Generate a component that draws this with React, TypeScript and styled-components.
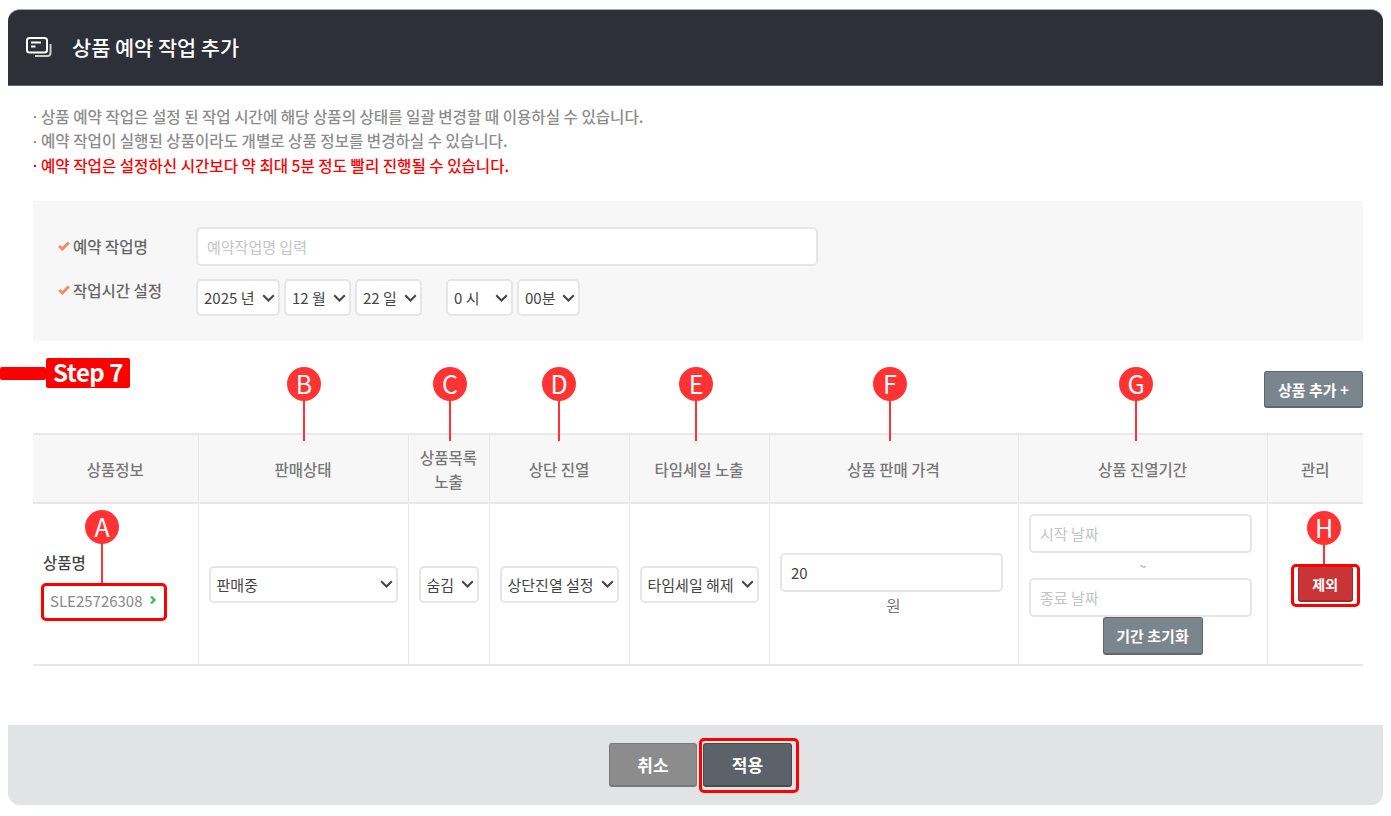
import styled, { createGlobalStyle } from 'styled-components';

const GlobalStyle = createGlobalStyle`
    html, body {
        margin: 0;
        padding: 0;
        background: #fff;
    }
    body {
        font-family: "Noto Sans CJK KR", "Noto Sans", sans-serif;
        font-size: 15.5px;
        color: #555;
    }
`

const RED = '#ff0000';
const PIN_RED = '#ff3333';
const FONT = '"Noto Sans CJK KR", "Noto Sans", sans-serif';
const CHEVRON = `url("data:image/svg+xml,%3Csvg xmlns='http://www.w3.org/2000/svg' width='13' height='8' viewBox='0 0 13 8' fill='none' stroke='%23444' stroke-width='2'%3E%3Cpath d='M1.2 1.2l5.3 5.3 5.3-5.3'/%3E%3C/svg%3E")`;

const Panel = styled.div`
    position: relative;
    width: 1375px;
    height: 796px;
    margin: 9px 8px 0;
    display: flex;
    flex-direction: column;
`

const Header = styled.header`
    height: 77px;
    flex: none;
    box-sizing: border-box;
    display: flex;
    align-items: center;
    gap: 20px;
    padding: 0 18px 1px;
    background: #2d3039;
    border-top: 1px solid #aaa;
    border-bottom: 1px solid #666;
    border-radius: 12px 12px 0 0;
    color: #fff;

    h1 {
        margin: 0;
        font-size: 20.8px;
        font-weight: 500;
        line-height: 1;
    }
`

const Body = styled.div`
    flex: 1;
    padding: 18px 20px 0 25px;
`

const Notes = styled.ul`
    list-style: none;
    margin: 0 0 19px;
    padding: 0;
    height: 78px;
    font-size: 15.6px;
    line-height: 24.4px;
    color: #8c8c8c;
    font-weight: 500;
`

const Note = styled.li<{ $alert?: boolean }>`
    display: flex;
    align-items: center;
    color: ${p => p.$alert ? RED : 'inherit'};

    &::before {
        content: "";
        flex: none;
        width: 2px;
        height: 2px;
        margin: 2px 5px 0 1px;
        background: currentColor;
    }
`

const FormBox = styled.div`
    height: 140px;
    box-sizing: border-box;
    padding: 26px 25px 0;
    background: #f7f7f7;
    display: flex;
    flex-direction: column;
    gap: 13px;
`

const FormRow = styled.div`
    display: flex;
`

const FormLabel = styled.div<{ $h: number }>`
    width: 138px;
    flex: none;
    display: flex;
    align-items: center;
    gap: 3px;
    height: ${p => p.$h}px;
    font-weight: 500;
    color: #666;
`

const TimeFields = styled.div`
    display: flex;
    gap: 5px;
`

const TimeGroup = styled.div<{ $w: number }>`
    width: ${p => p.$w}px;
    display: flex;
    gap: 4px;
`

const fieldBase = `
    box-sizing: border-box;
    border: 2px solid #e6e6e6;
    border-radius: 5px;
    background-color: #fff;
    font-family: ${FONT};
    font-size: 15px;
    color: #444;
    outline: none;
`

const TextInput = styled.input<{ $w: number }>`
    ${fieldBase}
    width: ${p => p.$w}px;
    height: 39px;
    padding: 0 9px;

    &::placeholder {
        color: #c4c4c4;
    }
`

const CellInput = styled(TextInput)`
    margin-right: 4px;
`

const Select = styled.select<{ $w: number }>`
    ${fieldBase}
    appearance: none;
    width: ${p => p.$w}px;
    height: 37px;
    padding: 0 20px 0 6px;
    background-image: ${CHEVRON};
    background-repeat: no-repeat;
    background-position: right 3px center;
`

const Toolbar = styled.div`
    height: 92px;
    display: flex;
    justify-content: flex-end;
    align-items: flex-start;
    padding-top: 30px;
    box-sizing: border-box;
`

const ActionButton = styled.button<{ $w: number; $h: number; $color?: string; $edge?: string; $size?: number }>`
    width: ${p => p.$w}px;
    height: ${p => p.$h}px;
    box-sizing: border-box;
    padding: 0;
    border: 1px solid ${p => p.$edge || '#5f6870'};
    border-bottom-width: 2px;
    border-radius: 3px;
    background: ${p => p.$color || '#7b858e'};
    color: #fff;
    font-family: ${FONT};
    font-size: ${p => p.$size || 15}px;
    font-weight: 700;
`

const ResetButton = styled(ActionButton)`
    margin-left: 20px;
`

const RemoveButton = styled(ActionButton)`
    margin-left: 20px;
`

const Table = styled.table`
    width: 1330px;
    table-layout: fixed;
    border-collapse: collapse;
    border-top: 2px solid #e8e8e8;
    border-bottom: 2px solid #e8e8e8;
`

const Th = styled.th`
    height: 67px;
    padding: 0;
    background: #f7f7f7;
    border-right: 1px solid #e8e8e8;
    border-bottom: 2px solid #e8e8e8;
    font-size: 15.5px;
    line-height: 24px;
    font-weight: 500;
    color: #777;
    text-align: center;

    &:last-child {
        border-right: 0;
    }
`

const Td = styled.td<{ $left?: boolean }>`
    height: 160px;
    padding: 0;
    border-right: 1px solid #e8e8e8;
    text-align: ${p => p.$left ? 'left' : 'center'};
    vertical-align: middle;

    &:last-child {
        border-right: 0;
    }
`

const ProductInfo = styled.div`
    padding-bottom: 4px;
`

const ProductName = styled.div`
    margin: 0 0 16px 10px;
    font-weight: 500;
    color: #444;
    line-height: 20px;
`

const ProductLink = styled.div`
    display: flex;
    align-items: center;
    gap: 6px;
    margin-left: 17px;
    height: 24px;
    font-size: 15px;
    color: #888;
`

const Unit = styled.div`
    margin-top: 3px;
    color: #777;
    line-height: 20px;
`

const Tilde = styled.div`
    height: 25px;
    line-height: 25px;
    color: #999;
    font-size: 12px;
`

const DateCell = styled.div`
    display: flex;
    flex-direction: column;
    align-items: center;
`

const Footer = styled.footer`
    height: 80px;
    flex: none;
    box-sizing: border-box;
    padding-left: 10px;
    display: flex;
    justify-content: center;
    align-items: center;
    gap: 6px;
    background: #e2e3e5;
    border-radius: 0 0 12px 12px;
`

const Pin = styled.div<{ $x: number; $y: number; $line: number }>`
    position: absolute;
    left: ${p => p.$x - 17}px;
    top: ${p => p.$y - 17}px;
    width: 34px;
    height: 34px;
    border-radius: 50%;
    background: ${PIN_RED};
    color: #fff;
    font-family: ${FONT};
    font-size: 25px;
    font-weight: 400;
    line-height: 33px;
    text-align: center;

    &::after {
        content: "";
        position: absolute;
        left: 16px;
        top: 33px;
        width: 2px;
        height: ${p => p.$line}px;
        background: ${PIN_RED};
    }
`

const Outline = styled.div<{ $x: number; $y: number; $w: number; $h: number }>`
    position: absolute;
    left: ${p => p.$x}px;
    top: ${p => p.$y}px;
    width: ${p => p.$w}px;
    height: ${p => p.$h}px;
    box-sizing: border-box;
    border: 3px solid ${RED};
    border-radius: 5px;
    pointer-events: none;
`

const StepBar = styled.div`
    position: absolute;
    left: -8px;
    top: 358px;
    width: 46px;
    height: 13px;
    border-radius: 2px;
    background: ${RED};
`

const StepTag = styled.div`
    position: absolute;
    left: 38px;
    top: 349px;
    width: 84px;
    height: 30px;
    border-radius: 2px;
    background: ${RED};
    color: #fff;
    font-family: ${FONT};
    font-size: 24px;
    font-weight: 700;
    letter-spacing: -0.5px;
    line-height: 27px;
    text-align: center;
`

const columns = [165, 210, 81, 140, 140, 249, 249, 96];

const pins = [
    { label: 'A', x: 94, y: 518, line: 42 },
    { label: 'B', x: 296, y: 375, line: 41 },
    { label: 'C', x: 442, y: 375, line: 41 },
    { label: 'D', x: 551, y: 375, line: 41 },
    { label: 'E', x: 688, y: 375, line: 41 },
    { label: 'F', x: 882, y: 375, line: 41 },
    { label: 'G', x: 1128, y: 375, line: 41 },
    { label: 'H', x: 1316, y: 519, line: 24 },
];

function TitleIcon() {
    return (
        <svg width="26" height="20" viewBox="0 0 26 20" fill="none" stroke="#fff" strokeWidth="2">
            <rect x="1" y="1" width="20" height="14.5" rx="2.5" />
            <path d="M5 5.5h10M5 9.5h4.5" />
            <path d="M24.5 7v9a3 3 0 0 1-3 3H9" stroke="#ccc" />
        </svg>
    );
}

function CheckMark() {
    return (
        <svg width="12" height="10" viewBox="0 0 12 10" fill="none" stroke="#f58b5a" strokeWidth="2.8">
            <path d="M1.2 5l3.2 3L10.8 1.5" />
        </svg>
    );
}

function GreenChevron() {
    return (
        <svg width="8" height="10" viewBox="0 0 8 10" fill="none" stroke="#3dbb5a" strokeWidth="2.4">
            <path d="M2 1.5L5.5 5 2 8.5" />
        </svg>
    );
}

function App() {
    return (
        <>
            <GlobalStyle />
            <Panel>
                <Header>
                    <TitleIcon />
                    <h1>상품 예약 작업 추가</h1>
                </Header>
                <Body>
                    <Notes>
                        <Note>상품 예약 작업은 설정 된 작업 시간에 해당 상품의 상태를 일괄 변경할 때 이용하실 수 있습니다.</Note>
                        <Note>예약 작업이 실행된 상품이라도 개별로 상품 정보를 변경하실 수 있습니다.</Note>
                        <Note $alert>예약 작업은 설정하신 시간보다 약 최대 5분 정도 빨리 진행될 수 있습니다.</Note>
                    </Notes>
                    <FormBox>
                        <FormRow>
                            <FormLabel $h={37}><CheckMark />예약 작업명</FormLabel>
                            <TextInput $w={622} placeholder="예약작업명 입력" />
                        </FormRow>
                        <FormRow>
                            <FormLabel $h={22}><CheckMark />작업시간 설정</FormLabel>
                            <TimeFields>
                                <TimeGroup $w={245}>
                                    <Select $w={84} defaultValue="2025 년"><option>2025 년</option></Select>
                                    <Select $w={67} defaultValue="12 월"><option>12 월</option></Select>
                                    <Select $w={67} defaultValue="22 일"><option>22 일</option></Select>
                                </TimeGroup>
                                <TimeGroup $w={250}>
                                    <Select $w={67} defaultValue="0 시"><option>0 시</option></Select>
                                    <Select $w={63} defaultValue="00분"><option>00분</option></Select>
                                </TimeGroup>
                            </TimeFields>
                        </FormRow>
                    </FormBox>
                    <Toolbar>
                        <ActionButton $w={99} $h={37}>상품 추가 +</ActionButton>
                    </Toolbar>
                    <Table>
                        <colgroup>
                            {columns.map((w, i) => <col key={i} width={w} />)}
                        </colgroup>
                        <thead>
                            <tr>
                                <Th>상품정보</Th>
                                <Th>판매상태</Th>
                                <Th>상품목록<br />노출</Th>
                                <Th>상단 진열</Th>
                                <Th>타임세일 노출</Th>
                                <Th>상품 판매 가격</Th>
                                <Th>상품 진열기간</Th>
                                <Th>관리</Th>
                            </tr>
                        </thead>
                        <tbody>
                            <tr>
                                <Td $left>
                                    <ProductInfo>
                                        <ProductName>상품명</ProductName>
                                        <ProductLink>SLE25726308 <GreenChevron /></ProductLink>
                                    </ProductInfo>
                                </Td>
                                <Td><Select $w={189} defaultValue="판매중"><option>판매중</option></Select></Td>
                                <Td><Select $w={60} defaultValue="숨김"><option>숨김</option></Select></Td>
                                <Td><Select $w={119} defaultValue="상단진열 설정"><option>상단진열 설정</option></Select></Td>
                                <Td><Select $w={119} defaultValue="타임세일 해제"><option>타임세일 해제</option></Select></Td>
                                <Td>
                                    <CellInput $w={223} defaultValue="20" />
                                    <Unit>원</Unit>
                                </Td>
                                <Td>
                                    <DateCell>
                                        <CellInput $w={223} placeholder="시작 날짜" />
                                        <Tilde>~</Tilde>
                                        <CellInput $w={223} placeholder="종료 날짜" />
                                        <ResetButton $w={100} $h={38}>기간 초기화</ResetButton>
                                    </DateCell>
                                </Td>
                                <Td>
                                    <RemoveButton $w={55} $h={36} $color="#c93537" $edge="#9e2a2c" $size={14}>제외</RemoveButton>
                                </Td>
                            </tr>
                        </tbody>
                    </Table>
                </Body>
                <Footer>
                    <ActionButton $w={88} $h={44} $color="#8c8c8c" $edge="#7a7a7a" $size={17}>취소</ActionButton>
                    <ActionButton $w={89} $h={44} $color="#5c6269" $edge="#474c52" $size={17}>적용</ActionButton>
                </Footer>

                <StepBar />
                <StepTag>Step 7</StepTag>
                {pins.map(pin => (
                    <Pin key={pin.label} $x={pin.x} $y={pin.y} $line={pin.line}>{pin.label}</Pin>
                ))}
                <Outline $x={33} $y={574} $w={126} $h={38} />
                <Outline $x={1283} $y={555} $w={69} $h={43} />
                <Outline $x={691} $y={729} $w={100} $h={55} />
            </Panel>
        </>
    );
}

export default App;
